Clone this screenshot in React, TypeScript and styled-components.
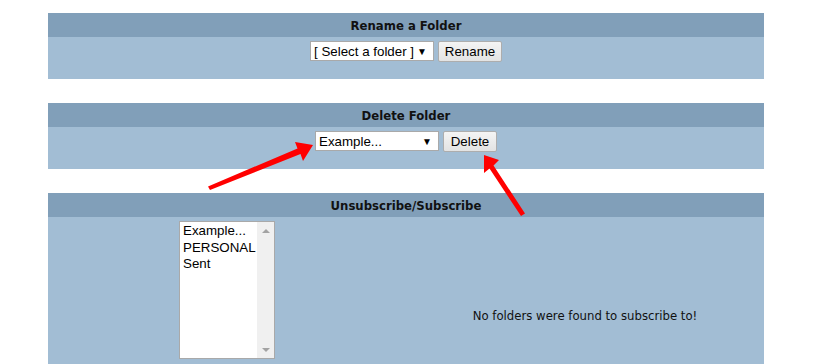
import React from "react";
import styled, { createGlobalStyle } from "styled-components";

const HEAD_BG = "#819fb9";
const BODY_BG = "#a2bdd4";

const GlobalStyle = createGlobalStyle`
  html, body {
    margin: 0;
    padding: 0;
    background: #fff;
  }
`;

const Page = styled.div`
  position: relative;
  width: 836px;
  height: 364px;
  overflow: hidden;
  padding: 13px 0 0 48px;
  box-sizing: border-box;
  display: flex;
  flex-direction: column;
  gap: 24px;
`;

const Panel = styled.section`
  width: 716px;
  background: ${BODY_BG};
`;

const PanelHead = styled.div`
  height: 24px;
  background: ${HEAD_BG};
  display: flex;
  align-items: center;
  justify-content: center;
  font-family: "DejaVu Sans Condensed", "DejaVu Sans", sans-serif;
  font-weight: bold;
  font-size: 13px;
  color: #111;
`;

const FormRow = styled.div`
  display: flex;
  justify-content: center;
  align-items: flex-start;
  gap: 4px;
  padding: 4px 0 17px;
  height: 42px;
  box-sizing: border-box;
`;

const SelectBox = styled.div<{ $width: number }>`
  width: ${(p) => p.$width}px;
  height: 20px;
  box-sizing: border-box;
  background: #fff;
  border: 1px solid #a9a9a9;
  display: flex;
  align-items: center;
  justify-content: space-between;
  padding: 0 6px 0 3px;
  font-family: "Liberation Sans", Arial, sans-serif;
  font-size: 13.33px;
  color: #000;
`;

const Caret = styled.span`
  font-size: 10px;
  color: #000;
`;

const Button = styled.button<{ $width: number }>`
  width: ${(p) => p.$width}px;
  height: 21px;
  box-sizing: border-box;
  padding: 0;
  border: 1px solid #adadad;
  border-radius: 2px;
  background: linear-gradient(#f4f4f4, #e3e3e3);
  font-family: "Liberation Sans", Arial, sans-serif;
  font-size: 13.33px;
  color: #000;
`;

const SubGrid = styled.div`
  display: grid;
  grid-template-columns: 358px 358px;
  align-items: center;
`;

const LeftCell = styled.div`
  display: flex;
  justify-content: center;
  padding: 4px 0 54px;
`;

const RightCell = styled.div`
  text-align: center;
  font-family: "DejaVu Sans Condensed", "DejaVu Sans", sans-serif;
  font-size: 13px;
  color: #111;
`;

const ListBox = styled.div`
  width: 96px;
  height: 138px;
  box-sizing: border-box;
  border: 1px solid #a9a9a9;
  background: #fff;
  display: flex;
`;

const ListItems = styled.div`
  flex: 1;
  padding: 1px 0 0 3px;
  font-family: "Liberation Sans", Arial, sans-serif;
  font-size: 13.33px;
  line-height: 16.6px;
  color: #000;
`;

const ScrollTrack = styled.div`
  width: 17px;
  background: #f0f0f0;
  display: flex;
  flex-direction: column;
  justify-content: space-between;
  align-items: center;
  padding: 7px 0 6px;
  box-sizing: border-box;
`;

const ScrollArrow = styled.span<{ $down?: boolean }>`
  width: 0;
  height: 0;
  border-left: 4px solid transparent;
  border-right: 4px solid transparent;
  ${(p) =>
    p.$down
      ? "border-top: 4px solid #a3a3a3;"
      : "border-bottom: 4px solid #a3a3a3;"}
`;

const Overlay = styled.svg`
  position: absolute;
  left: 0;
  top: 0;
  pointer-events: none;
`;

export default function App() {
  return (
    <>
      <GlobalStyle />
      <Page>
        <Panel>
          <PanelHead>Rename a Folder</PanelHead>
          <FormRow>
            <SelectBox $width={124}>
              <span>[ Select a folder ]</span>
              <Caret>▼</Caret>
            </SelectBox>
            <Button $width={64}>Rename</Button>
          </FormRow>
        </Panel>

        <Panel>
          <PanelHead>Delete Folder</PanelHead>
          <FormRow>
            <SelectBox $width={124}>
              <span>Example...</span>
              <Caret>▼</Caret>
            </SelectBox>
            <Button $width={54}>Delete</Button>
          </FormRow>
        </Panel>

        <Panel>
          <PanelHead>Unsubscribe/Subscribe</PanelHead>
          <SubGrid>
            <LeftCell>
              <ListBox>
                <ListItems>
                  <div>Example...</div>
                  <div>PERSONAL</div>
                  <div>Sent</div>
                </ListItems>
                <ScrollTrack>
                  <ScrollArrow />
                  <ScrollArrow $down />
                </ScrollTrack>
              </ListBox>
            </LeftCell>
            <RightCell>No folders were found to subscribe to!</RightCell>
          </SubGrid>
        </Panel>

        <Overlay width="836" height="364" viewBox="0 0 836 364">
          <polygon
            fill="#f00"
            points="208,186.5 297.5,148.5 295,142 313,145 303,161 300.5,154 210,190"
          />
          <polygon
            fill="#f00"
            points="521,216 489.5,168.5 484,173 484,155 499,160 493.5,165.5 525,213.5"
          />
        </Overlay>
      </Page>
    </>
  );
}
